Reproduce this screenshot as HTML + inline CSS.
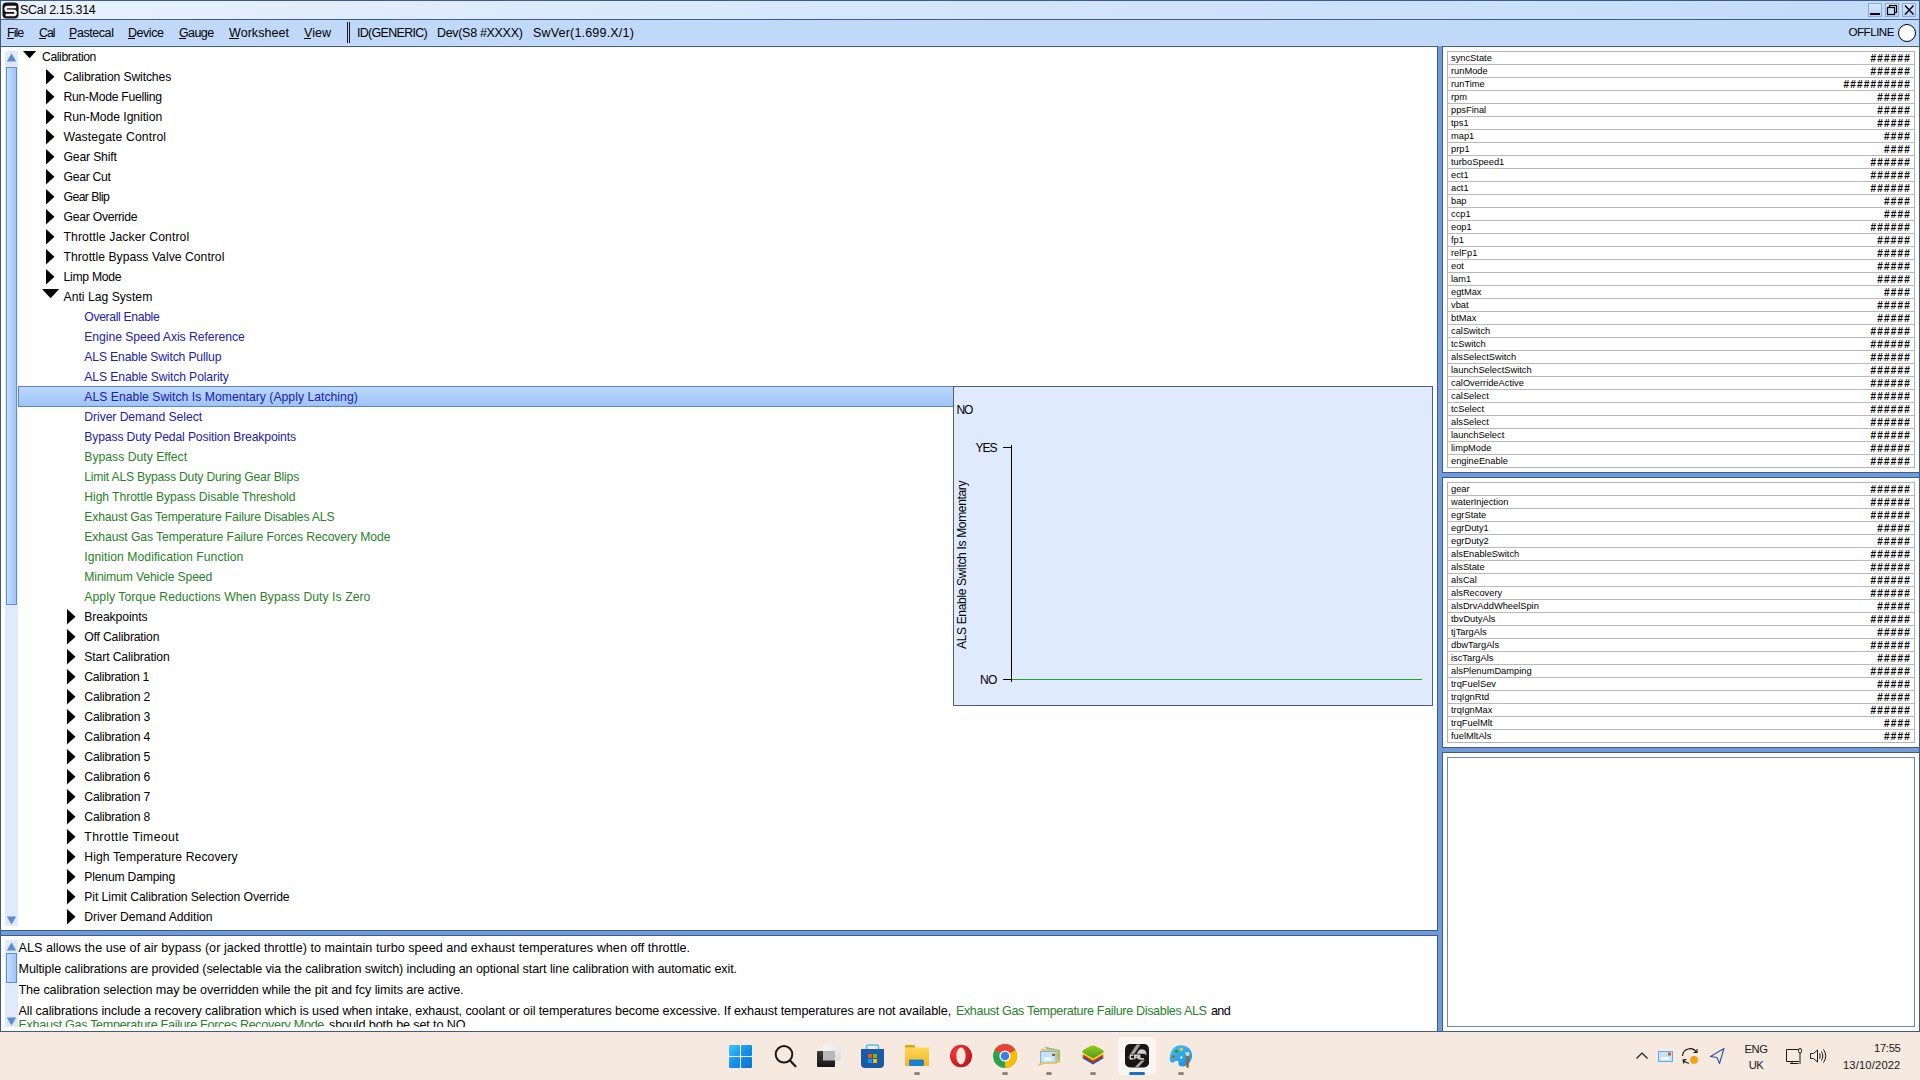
<!DOCTYPE html><html><head><meta charset="utf-8"><style>
*{margin:0;padding:0;box-sizing:border-box}
html,body{width:1920px;height:1080px;overflow:hidden;background:#f6e9df;font-family:"Liberation Sans",sans-serif}
.a{position:absolute}
.t{position:absolute;white-space:pre;line-height:1;font-family:"Liberation Sans",sans-serif}
.u{text-decoration:underline;text-underline-offset:1px}
</style></head><body>
<div class="a" style="left:0;top:0;width:1920px;height:1032px;background:#6f9cd9;border:1px solid #3e5a8a"></div>
<div class="a" style="left:1px;top:1px;width:1918px;height:18px;background:linear-gradient(90deg,#e9f1fd 0%,#d6e6fb 45%,#c3dbf9 100%)"></div>
<div class="a" style="left:0;top:19px;width:1920px;height:1px;background:#3e5a8a"></div>
<div class="a" style="left:1px;top:20px;width:1918px;height:26px;background:#c1d9f9"></div>
<div class="a" style="left:1px;top:45px;width:1918px;height:1px;background:#cadffb"></div>
<svg class="a" style="left:2px;top:2px" width="17" height="17" viewBox="0 0 17 17">
<rect x="0.5" y="0.5" width="16" height="16" rx="4" fill="#111"/>
<path d="M14.2 4.9 H5.6 Q3.6 4.9 3.6 6.9 Q3.6 8.8 5.6 8.8 H11.6 Q13.6 8.8 13.6 10.9 Q13.6 13 11.6 13 H3.6" stroke="#f4f4f4" stroke-width="2.5" fill="none"/>
</svg>
<div class="t " style="left:20px;top:4px;font-size:12.5px;color:#000;letter-spacing:-0.287px;">SCal 2.15.314</div>
<div class="a" style="left:1868px;top:3px;width:14px;height:14px;border:1px solid #8eaad6;background:linear-gradient(#d8e8fd,#b5d2f8)"></div>
<div class="a" style="left:1885px;top:3px;width:14px;height:14px;border:1px solid #8eaad6;background:linear-gradient(#d8e8fd,#b5d2f8)"></div>
<div class="a" style="left:1902px;top:3px;width:14px;height:14px;border:1px solid #8eaad6;background:linear-gradient(#d8e8fd,#b5d2f8)"></div>
<div class="a" style="left:1870px;top:13px;width:10px;height:2px;background:#000"></div>
<svg class="a" style="left:1885px;top:3px" width="14" height="14" viewBox="0 0 14 14"><rect x="4.5" y="2.5" width="7" height="7" fill="none" stroke="#000" stroke-width="1.2"/><rect x="2.5" y="4.5" width="7" height="7" fill="#c8dcf9" stroke="#000" stroke-width="1.2"/></svg>
<svg class="a" style="left:1902px;top:3px" width="14" height="14" viewBox="0 0 14 14"><path d="M3 2.5 L11.5 11.5 M11.5 2.5 L3 11.5" stroke="#000" stroke-width="1.4"/></svg>
<div class="t " style="left:7px;top:27px;font-size:12.5px;color:#000;letter-spacing:-0.964px;">File</div>
<div class="a" style="left:7px;top:38px;width:7px;height:1px;background:#000"></div>
<div class="t " style="left:39px;top:27px;font-size:12.5px;color:#000;letter-spacing:-1.089px;">Cal</div>
<div class="a" style="left:39px;top:38px;width:7px;height:1px;background:#000"></div>
<div class="t " style="left:69px;top:27px;font-size:12.5px;color:#000;letter-spacing:-0.432px;">Pastecal</div>
<div class="a" style="left:69px;top:38px;width:7px;height:1px;background:#000"></div>
<div class="t " style="left:128px;top:27px;font-size:12.5px;color:#000;letter-spacing:-0.453px;">Device</div>
<div class="a" style="left:128px;top:38px;width:7px;height:1px;background:#000"></div>
<div class="t " style="left:179px;top:27px;font-size:12.5px;color:#000;letter-spacing:-0.606px;">Gauge</div>
<div class="a" style="left:179px;top:38px;width:7px;height:1px;background:#000"></div>
<div class="t " style="left:229px;top:27px;font-size:12.5px;color:#000;letter-spacing:0.054px;">Worksheet</div>
<div class="a" style="left:229px;top:38px;width:10px;height:1px;background:#000"></div>
<div class="t " style="left:304px;top:27px;font-size:12.5px;color:#000;letter-spacing:0.031px;">View</div>
<div class="a" style="left:304px;top:38px;width:7px;height:1px;background:#000"></div>
<div class="a" style="left:347px;top:22px;width:1px;height:21px;background:#1a1a1a"></div>
<div class="a" style="left:349px;top:22px;width:1px;height:21px;background:#1a1a1a"></div>
<div class="t " style="left:357px;top:27px;font-size:12.5px;color:#000;letter-spacing:-0.707px;">ID(GENERIC)</div>
<div class="t " style="left:437px;top:27px;font-size:12.5px;color:#000;letter-spacing:-0.317px;">Dev(S8 #XXXX)</div>
<div class="t " style="left:533px;top:27px;font-size:12.5px;color:#000;letter-spacing:0.189px;">SwVer(1.699.X/1)</div>
<div class="t " style="left:1848.5px;top:26px;font-size:11.6px;color:#000;letter-spacing:-0.496px;">OFFLINE</div>
<div class="a" style="left:1898px;top:24px;width:18px;height:18px;border-radius:50%;border:1.3px solid #000;background:#fff"></div>
<div class="a" style="left:0px;top:46px;width:1438px;height:885px;border:1px solid #3e5a8a;background:#fff"></div>
<div class="a" style="left:0px;top:935px;width:1438px;height:97px;border:1px solid #3e5a8a;background:#fff"></div>
<div class="a" style="left:1442px;top:46px;width:478px;height:427px;border:1px solid #3e5a8a;background:#fff"></div>
<div class="a" style="left:1442px;top:477px;width:478px;height:271px;border:1px solid #3e5a8a;background:#fff"></div>
<div class="a" style="left:1442px;top:752px;width:478px;height:280px;border:1px solid #3e5a8a;background:#fff"></div>
<div class="a" style="left:5px;top:51px;width:13px;height:875px;background:#dfebfc"></div>
<svg class="a" style="left:6px;top:53px" width="11" height="9" viewBox="0 0 11 9"><path d="M5.5 0.5 L10.2 8.5 L0.8 8.5 Z" fill="#5b8bd0"/></svg>
<svg class="a" style="left:6px;top:916px" width="11" height="9" viewBox="0 0 11 9"><path d="M0.8 0.5 L10.2 0.5 L5.5 8.5 Z" fill="#5b8bd0"/></svg>
<div class="a" style="left:6px;top:67px;width:11px;height:538px;border:1px solid #6a8cc0;background:linear-gradient(90deg,#c4defd,#9cc3f8)"></div>
<div class="a" style="left:5px;top:940px;width:13px;height:87px;background:#dfebfc"></div>
<svg class="a" style="left:6px;top:942px" width="11" height="9" viewBox="0 0 11 9"><path d="M5.5 0.5 L10.2 8.5 L0.8 8.5 Z" fill="#5b8bd0"/></svg>
<svg class="a" style="left:6px;top:1017px" width="11" height="9" viewBox="0 0 11 9"><path d="M0.8 0.5 L10.2 0.5 L5.5 8.5 Z" fill="#5b8bd0"/></svg>
<div class="a" style="left:6px;top:953px;width:11px;height:30px;border:1px solid #6a8cc0;background:linear-gradient(90deg,#c4defd,#9cc3f8)"></div>
<svg class="a" style="left:23px;top:51px" width="14" height="8" viewBox="0 0 14 8"><path d="M0 0 L13.2 0 L6.6 7.2 Z" fill="#000"/></svg>
<div class="t " style="left:42px;top:51px;font-size:12.2px;color:#000;letter-spacing:-0.388px;">Calibration</div>
<svg class="a" style="left:46px;top:69px" width="9" height="16" viewBox="0 0 9 16"><path d="M0 0 L8.5 7.75 L0 15.5 Z" fill="#000"/></svg>
<div class="t " style="left:63.5px;top:71px;font-size:12.2px;color:#000;letter-spacing:-0.141px;">Calibration Switches</div>
<svg class="a" style="left:46px;top:89px" width="9" height="16" viewBox="0 0 9 16"><path d="M0 0 L8.5 7.75 L0 15.5 Z" fill="#000"/></svg>
<div class="t " style="left:63.5px;top:91px;font-size:12.2px;color:#000;letter-spacing:-0.276px;">Run-Mode Fuelling</div>
<svg class="a" style="left:46px;top:109px" width="9" height="16" viewBox="0 0 9 16"><path d="M0 0 L8.5 7.75 L0 15.5 Z" fill="#000"/></svg>
<div class="t " style="left:63.5px;top:111px;font-size:12.2px;color:#000;letter-spacing:-0.053px;">Run-Mode Ignition</div>
<svg class="a" style="left:46px;top:129px" width="9" height="16" viewBox="0 0 9 16"><path d="M0 0 L8.5 7.75 L0 15.5 Z" fill="#000"/></svg>
<div class="t " style="left:63.5px;top:131px;font-size:12.2px;color:#000;letter-spacing:0.130px;">Wastegate Control</div>
<svg class="a" style="left:46px;top:149px" width="9" height="16" viewBox="0 0 9 16"><path d="M0 0 L8.5 7.75 L0 15.5 Z" fill="#000"/></svg>
<div class="t " style="left:63.5px;top:151px;font-size:12.2px;color:#000;letter-spacing:-0.167px;">Gear Shift</div>
<svg class="a" style="left:46px;top:169px" width="9" height="16" viewBox="0 0 9 16"><path d="M0 0 L8.5 7.75 L0 15.5 Z" fill="#000"/></svg>
<div class="t " style="left:63.5px;top:171px;font-size:12.2px;color:#000;letter-spacing:-0.282px;">Gear Cut</div>
<svg class="a" style="left:46px;top:189px" width="9" height="16" viewBox="0 0 9 16"><path d="M0 0 L8.5 7.75 L0 15.5 Z" fill="#000"/></svg>
<div class="t " style="left:63.5px;top:191px;font-size:12.2px;color:#000;letter-spacing:-0.557px;">Gear Blip</div>
<svg class="a" style="left:46px;top:209px" width="9" height="16" viewBox="0 0 9 16"><path d="M0 0 L8.5 7.75 L0 15.5 Z" fill="#000"/></svg>
<div class="t " style="left:63.5px;top:211px;font-size:12.2px;color:#000;letter-spacing:-0.263px;">Gear Override</div>
<svg class="a" style="left:46px;top:229px" width="9" height="16" viewBox="0 0 9 16"><path d="M0 0 L8.5 7.75 L0 15.5 Z" fill="#000"/></svg>
<div class="t " style="left:63.5px;top:231px;font-size:12.2px;color:#000;letter-spacing:0.110px;">Throttle Jacker Control</div>
<svg class="a" style="left:46px;top:249px" width="9" height="16" viewBox="0 0 9 16"><path d="M0 0 L8.5 7.75 L0 15.5 Z" fill="#000"/></svg>
<div class="t " style="left:63.5px;top:251px;font-size:12.2px;color:#000;letter-spacing:0.020px;">Throttle Bypass Valve Control</div>
<svg class="a" style="left:46px;top:269px" width="9" height="16" viewBox="0 0 9 16"><path d="M0 0 L8.5 7.75 L0 15.5 Z" fill="#000"/></svg>
<div class="t " style="left:63.5px;top:271px;font-size:12.2px;color:#000;letter-spacing:-0.277px;">Limp Mode</div>
<svg class="a" style="left:42px;top:289px" width="18" height="10" viewBox="0 0 18 10"><path d="M0 0 L17.2 0 L8.6 9.3 Z" fill="#000"/></svg>
<div class="t " style="left:63.5px;top:291px;font-size:12.2px;color:#000;letter-spacing:0.003px;">Anti Lag System</div>
<div class="t " style="left:84.3px;top:311px;font-size:12.2px;color:#2121a6;letter-spacing:-0.347px;">Overall Enable</div>
<div class="t " style="left:84.3px;top:331px;font-size:12.2px;color:#2121a6;letter-spacing:-0.057px;">Engine Speed Axis Reference</div>
<div class="t " style="left:84.3px;top:351px;font-size:12.2px;color:#2121a6;letter-spacing:-0.163px;">ALS Enable Switch Pullup</div>
<div class="t " style="left:84.3px;top:371px;font-size:12.2px;color:#2121a6;letter-spacing:-0.123px;">ALS Enable Switch Polarity</div>
<div class="a" style="left:18px;top:386px;width:940px;height:21px;border:1px solid #5f82b8;background:linear-gradient(#bcd8fc,#9dc4f8)"></div>
<div class="t " style="left:84.3px;top:391px;font-size:12.2px;color:#2121a6;letter-spacing:0.025px;">ALS Enable Switch Is Momentary (Apply Latching)</div>
<div class="t " style="left:84.3px;top:411px;font-size:12.2px;color:#2121a6;letter-spacing:-0.076px;">Driver Demand Select</div>
<div class="t " style="left:84.3px;top:431px;font-size:12.2px;color:#2121a6;letter-spacing:-0.154px;">Bypass Duty Pedal Position Breakpoints</div>
<div class="t " style="left:84.3px;top:451px;font-size:12.2px;color:#2a7f2a;letter-spacing:0.003px;">Bypass Duty Effect</div>
<div class="t " style="left:84.3px;top:471px;font-size:12.2px;color:#2a7f2a;letter-spacing:-0.207px;">Limit ALS Bypass Duty During Gear Blips</div>
<div class="t " style="left:84.3px;top:491px;font-size:12.2px;color:#2a7f2a;letter-spacing:-0.084px;">High Throttle Bypass Disable Threshold</div>
<div class="t " style="left:84.3px;top:511px;font-size:12.2px;color:#2a7f2a;letter-spacing:-0.177px;">Exhaust Gas Temperature Failure Disables ALS</div>
<div class="t " style="left:84.3px;top:531px;font-size:12.2px;color:#2a7f2a;letter-spacing:-0.103px;">Exhaust Gas Temperature Failure Forces Recovery Mode</div>
<div class="t " style="left:84.3px;top:551px;font-size:12.2px;color:#2a7f2a;letter-spacing:0.041px;">Ignition Modification Function</div>
<div class="t " style="left:84.3px;top:571px;font-size:12.2px;color:#2a7f2a;letter-spacing:-0.140px;">Minimum Vehicle Speed</div>
<div class="t " style="left:84.3px;top:591px;font-size:12.2px;color:#2a7f2a;letter-spacing:0.052px;">Apply Torque Reductions When Bypass Duty Is Zero</div>
<svg class="a" style="left:67px;top:609px" width="9" height="16" viewBox="0 0 9 16"><path d="M0 0 L8.5 7.75 L0 15.5 Z" fill="#000"/></svg>
<div class="t " style="left:84.3px;top:611px;font-size:12.2px;color:#000;letter-spacing:-0.114px;">Breakpoints</div>
<svg class="a" style="left:67px;top:629px" width="9" height="16" viewBox="0 0 9 16"><path d="M0 0 L8.5 7.75 L0 15.5 Z" fill="#000"/></svg>
<div class="t " style="left:84.3px;top:631px;font-size:12.2px;color:#000;letter-spacing:-0.179px;">Off Calibration</div>
<svg class="a" style="left:67px;top:649px" width="9" height="16" viewBox="0 0 9 16"><path d="M0 0 L8.5 7.75 L0 15.5 Z" fill="#000"/></svg>
<div class="t " style="left:84.3px;top:651px;font-size:12.2px;color:#000;letter-spacing:-0.123px;">Start Calibration</div>
<svg class="a" style="left:67px;top:669px" width="9" height="16" viewBox="0 0 9 16"><path d="M0 0 L8.5 7.75 L0 15.5 Z" fill="#000"/></svg>
<div class="t " style="left:84.3px;top:671px;font-size:12.2px;color:#000;letter-spacing:-0.287px;">Calibration 1</div>
<svg class="a" style="left:67px;top:689px" width="9" height="16" viewBox="0 0 9 16"><path d="M0 0 L8.5 7.75 L0 15.5 Z" fill="#000"/></svg>
<div class="t " style="left:84.3px;top:691px;font-size:12.2px;color:#000;letter-spacing:-0.211px;">Calibration 2</div>
<svg class="a" style="left:67px;top:709px" width="9" height="16" viewBox="0 0 9 16"><path d="M0 0 L8.5 7.75 L0 15.5 Z" fill="#000"/></svg>
<div class="t " style="left:84.3px;top:711px;font-size:12.2px;color:#000;letter-spacing:-0.211px;">Calibration 3</div>
<svg class="a" style="left:67px;top:729px" width="9" height="16" viewBox="0 0 9 16"><path d="M0 0 L8.5 7.75 L0 15.5 Z" fill="#000"/></svg>
<div class="t " style="left:84.3px;top:731px;font-size:12.2px;color:#000;letter-spacing:-0.211px;">Calibration 4</div>
<svg class="a" style="left:67px;top:749px" width="9" height="16" viewBox="0 0 9 16"><path d="M0 0 L8.5 7.75 L0 15.5 Z" fill="#000"/></svg>
<div class="t " style="left:84.3px;top:751px;font-size:12.2px;color:#000;letter-spacing:-0.211px;">Calibration 5</div>
<svg class="a" style="left:67px;top:769px" width="9" height="16" viewBox="0 0 9 16"><path d="M0 0 L8.5 7.75 L0 15.5 Z" fill="#000"/></svg>
<div class="t " style="left:84.3px;top:771px;font-size:12.2px;color:#000;letter-spacing:-0.211px;">Calibration 6</div>
<svg class="a" style="left:67px;top:789px" width="9" height="16" viewBox="0 0 9 16"><path d="M0 0 L8.5 7.75 L0 15.5 Z" fill="#000"/></svg>
<div class="t " style="left:84.3px;top:791px;font-size:12.2px;color:#000;letter-spacing:-0.211px;">Calibration 7</div>
<svg class="a" style="left:67px;top:809px" width="9" height="16" viewBox="0 0 9 16"><path d="M0 0 L8.5 7.75 L0 15.5 Z" fill="#000"/></svg>
<div class="t " style="left:84.3px;top:811px;font-size:12.2px;color:#000;letter-spacing:-0.211px;">Calibration 8</div>
<svg class="a" style="left:67px;top:829px" width="9" height="16" viewBox="0 0 9 16"><path d="M0 0 L8.5 7.75 L0 15.5 Z" fill="#000"/></svg>
<div class="t " style="left:84.3px;top:831px;font-size:12.2px;color:#000;letter-spacing:0.421px;">Throttle Timeout</div>
<svg class="a" style="left:67px;top:849px" width="9" height="16" viewBox="0 0 9 16"><path d="M0 0 L8.5 7.75 L0 15.5 Z" fill="#000"/></svg>
<div class="t " style="left:84.3px;top:851px;font-size:12.2px;color:#000;letter-spacing:0.079px;">High Temperature Recovery</div>
<svg class="a" style="left:67px;top:869px" width="9" height="16" viewBox="0 0 9 16"><path d="M0 0 L8.5 7.75 L0 15.5 Z" fill="#000"/></svg>
<div class="t " style="left:84.3px;top:871px;font-size:12.2px;color:#000;letter-spacing:-0.199px;">Plenum Damping</div>
<svg class="a" style="left:67px;top:889px" width="9" height="16" viewBox="0 0 9 16"><path d="M0 0 L8.5 7.75 L0 15.5 Z" fill="#000"/></svg>
<div class="t " style="left:84.3px;top:891px;font-size:12.2px;color:#000;letter-spacing:-0.084px;">Pit Limit Calibration Selection Override</div>
<svg class="a" style="left:67px;top:909px" width="9" height="16" viewBox="0 0 9 16"><path d="M0 0 L8.5 7.75 L0 15.5 Z" fill="#000"/></svg>
<div class="t " style="left:84.3px;top:911px;font-size:12.2px;color:#000;letter-spacing:-0.019px;">Driver Demand Addition</div>
<div class="a" style="left:953px;top:386px;width:480px;height:320px;border:1px solid #4d5d7b;background:#dfeafc"></div>
<div class="t " style="left:956.4px;top:404px;font-size:12px;color:#000;letter-spacing:-1.000px;">NO</div>
<div class="t " style="left:975.6px;top:442px;font-size:12px;color:#000;letter-spacing:-1.005px;">YES</div>
<div class="t " style="left:980px;top:674px;font-size:12px;color:#000;letter-spacing:-0.650px;">NO</div>
<div class="a" style="left:1011px;top:445px;width:1px;height:237px;background:#000"></div>
<div class="a" style="left:1003px;top:447px;width:9px;height:1px;background:#000"></div>
<div class="a" style="left:1003px;top:679px;width:9px;height:1px;background:#000"></div>
<div class="a" style="left:1012px;top:679px;width:410px;height:1px;background:#2e9a3a"></div>
<div class="a" style="left:956px;top:649px;width:0;height:0"><div class="t" style="left:0;top:0;transform-origin:0 0;transform:rotate(-90deg);font-size:12px;line-height:1;letter-spacing:-0.33px;color:#000">ALS Enable Switch Is Momentary</div></div>
<div class="a" style="left:18px;top:940px;width:1415px;height:87px;overflow:hidden">
<div class="t " style="left:0.5px;top:2px;font-size:12.6px;color:#000;letter-spacing:0.027px;">ALS allows the use of air bypass (or jacked throttle) to maintain turbo speed and exhaust temperatures when off throttle.</div>
<div class="t " style="left:0.5px;top:23px;font-size:12.6px;color:#000;letter-spacing:-0.108px;">Multiple calibrations are provided (selectable via the calibration switch) including an optional start line calibration with automatic exit.</div>
<div class="t " style="left:0.5px;top:44px;font-size:12.6px;color:#000;letter-spacing:-0.077px;">The calibration selection may be overridden while the pit and fcy limits are active.</div>
<div class="t " style="left:0.5px;top:65px;font-size:12.6px;color:#000;letter-spacing:-0.105px;">All calibrations include a recovery calibration which is used when intake, exhaust, coolant or oil temperatures become excessive. If exhaust temperatures are not available,</div>
<div class="t " style="left:937.9px;top:65px;font-size:12.6px;color:#2a7f2a;letter-spacing:-0.358px;">Exhaust Gas Temperature Failure Disables ALS</div>
<div class="t " style="left:1193px;top:65px;font-size:12.6px;color:#000;letter-spacing:-0.672px;">and</div>
<div class="t " style="left:0.5px;top:79px;font-size:12.6px;color:#2a7f2a;letter-spacing:-0.312px;">Exhaust Gas Temperature Failure Forces Recovery Mode</div>
<div class="t " style="left:311px;top:79px;font-size:12.6px;color:#000;letter-spacing:-0.123px;">should both be set to NO.</div>
</div>
<div class="a" style="left:1447px;top:51px;width:468px;height:417px;border:1px solid #b4b4b4;background:#fff"></div>
<div class="t " style="left:1451px;top:54px;font-size:9.3px;color:#000;">syncState</div>
<div class="t" style="left:1870.50px;top:54px;font-size:10px;font-weight:bold;letter-spacing:1.19px;color:#000">######</div>
<div class="a" style="left:1448px;top:64px;width:466px;height:1px;background:#b9b9b9"></div>
<div class="t " style="left:1451px;top:67px;font-size:9.3px;color:#000;">runMode</div>
<div class="t" style="left:1870.50px;top:67px;font-size:10px;font-weight:bold;letter-spacing:1.19px;color:#000">######</div>
<div class="a" style="left:1448px;top:77px;width:466px;height:1px;background:#b9b9b9"></div>
<div class="t " style="left:1451px;top:80px;font-size:9.3px;color:#000;">runTime</div>
<div class="t" style="left:1843.50px;top:80px;font-size:10px;font-weight:bold;letter-spacing:1.19px;color:#000">##########</div>
<div class="a" style="left:1448px;top:90px;width:466px;height:1px;background:#b9b9b9"></div>
<div class="t " style="left:1451px;top:93px;font-size:9.3px;color:#000;">rpm</div>
<div class="t" style="left:1877.25px;top:93px;font-size:10px;font-weight:bold;letter-spacing:1.19px;color:#000">#####</div>
<div class="a" style="left:1448px;top:103px;width:466px;height:1px;background:#b9b9b9"></div>
<div class="t " style="left:1451px;top:106px;font-size:9.3px;color:#000;">ppsFinal</div>
<div class="t" style="left:1877.25px;top:106px;font-size:10px;font-weight:bold;letter-spacing:1.19px;color:#000">#####</div>
<div class="a" style="left:1448px;top:116px;width:466px;height:1px;background:#b9b9b9"></div>
<div class="t " style="left:1451px;top:119px;font-size:9.3px;color:#000;">tps1</div>
<div class="t" style="left:1877.25px;top:119px;font-size:10px;font-weight:bold;letter-spacing:1.19px;color:#000">#####</div>
<div class="a" style="left:1448px;top:129px;width:466px;height:1px;background:#b9b9b9"></div>
<div class="t " style="left:1451px;top:132px;font-size:9.3px;color:#000;">map1</div>
<div class="t" style="left:1884.00px;top:132px;font-size:10px;font-weight:bold;letter-spacing:1.19px;color:#000">####</div>
<div class="a" style="left:1448px;top:142px;width:466px;height:1px;background:#b9b9b9"></div>
<div class="t " style="left:1451px;top:145px;font-size:9.3px;color:#000;">prp1</div>
<div class="t" style="left:1884.00px;top:145px;font-size:10px;font-weight:bold;letter-spacing:1.19px;color:#000">####</div>
<div class="a" style="left:1448px;top:155px;width:466px;height:1px;background:#b9b9b9"></div>
<div class="t " style="left:1451px;top:158px;font-size:9.3px;color:#000;">turboSpeed1</div>
<div class="t" style="left:1870.50px;top:158px;font-size:10px;font-weight:bold;letter-spacing:1.19px;color:#000">######</div>
<div class="a" style="left:1448px;top:168px;width:466px;height:1px;background:#b9b9b9"></div>
<div class="t " style="left:1451px;top:171px;font-size:9.3px;color:#000;">ect1</div>
<div class="t" style="left:1870.50px;top:171px;font-size:10px;font-weight:bold;letter-spacing:1.19px;color:#000">######</div>
<div class="a" style="left:1448px;top:181px;width:466px;height:1px;background:#b9b9b9"></div>
<div class="t " style="left:1451px;top:184px;font-size:9.3px;color:#000;">act1</div>
<div class="t" style="left:1870.50px;top:184px;font-size:10px;font-weight:bold;letter-spacing:1.19px;color:#000">######</div>
<div class="a" style="left:1448px;top:194px;width:466px;height:1px;background:#b9b9b9"></div>
<div class="t " style="left:1451px;top:197px;font-size:9.3px;color:#000;">bap</div>
<div class="t" style="left:1884.00px;top:197px;font-size:10px;font-weight:bold;letter-spacing:1.19px;color:#000">####</div>
<div class="a" style="left:1448px;top:207px;width:466px;height:1px;background:#b9b9b9"></div>
<div class="t " style="left:1451px;top:210px;font-size:9.3px;color:#000;">ccp1</div>
<div class="t" style="left:1884.00px;top:210px;font-size:10px;font-weight:bold;letter-spacing:1.19px;color:#000">####</div>
<div class="a" style="left:1448px;top:220px;width:466px;height:1px;background:#b9b9b9"></div>
<div class="t " style="left:1451px;top:223px;font-size:9.3px;color:#000;">eop1</div>
<div class="t" style="left:1870.50px;top:223px;font-size:10px;font-weight:bold;letter-spacing:1.19px;color:#000">######</div>
<div class="a" style="left:1448px;top:233px;width:466px;height:1px;background:#b9b9b9"></div>
<div class="t " style="left:1451px;top:236px;font-size:9.3px;color:#000;">fp1</div>
<div class="t" style="left:1877.25px;top:236px;font-size:10px;font-weight:bold;letter-spacing:1.19px;color:#000">#####</div>
<div class="a" style="left:1448px;top:246px;width:466px;height:1px;background:#b9b9b9"></div>
<div class="t " style="left:1451px;top:249px;font-size:9.3px;color:#000;">relFp1</div>
<div class="t" style="left:1877.25px;top:249px;font-size:10px;font-weight:bold;letter-spacing:1.19px;color:#000">#####</div>
<div class="a" style="left:1448px;top:259px;width:466px;height:1px;background:#b9b9b9"></div>
<div class="t " style="left:1451px;top:262px;font-size:9.3px;color:#000;">eot</div>
<div class="t" style="left:1877.25px;top:262px;font-size:10px;font-weight:bold;letter-spacing:1.19px;color:#000">#####</div>
<div class="a" style="left:1448px;top:272px;width:466px;height:1px;background:#b9b9b9"></div>
<div class="t " style="left:1451px;top:275px;font-size:9.3px;color:#000;">lam1</div>
<div class="t" style="left:1877.25px;top:275px;font-size:10px;font-weight:bold;letter-spacing:1.19px;color:#000">#####</div>
<div class="a" style="left:1448px;top:285px;width:466px;height:1px;background:#b9b9b9"></div>
<div class="t " style="left:1451px;top:288px;font-size:9.3px;color:#000;">egtMax</div>
<div class="t" style="left:1884.00px;top:288px;font-size:10px;font-weight:bold;letter-spacing:1.19px;color:#000">####</div>
<div class="a" style="left:1448px;top:298px;width:466px;height:1px;background:#b9b9b9"></div>
<div class="t " style="left:1451px;top:301px;font-size:9.3px;color:#000;">vbat</div>
<div class="t" style="left:1877.25px;top:301px;font-size:10px;font-weight:bold;letter-spacing:1.19px;color:#000">#####</div>
<div class="a" style="left:1448px;top:311px;width:466px;height:1px;background:#b9b9b9"></div>
<div class="t " style="left:1451px;top:314px;font-size:9.3px;color:#000;">btMax</div>
<div class="t" style="left:1877.25px;top:314px;font-size:10px;font-weight:bold;letter-spacing:1.19px;color:#000">#####</div>
<div class="a" style="left:1448px;top:324px;width:466px;height:1px;background:#b9b9b9"></div>
<div class="t " style="left:1451px;top:327px;font-size:9.3px;color:#000;">calSwitch</div>
<div class="t" style="left:1870.50px;top:327px;font-size:10px;font-weight:bold;letter-spacing:1.19px;color:#000">######</div>
<div class="a" style="left:1448px;top:337px;width:466px;height:1px;background:#b9b9b9"></div>
<div class="t " style="left:1451px;top:340px;font-size:9.3px;color:#000;">tcSwitch</div>
<div class="t" style="left:1870.50px;top:340px;font-size:10px;font-weight:bold;letter-spacing:1.19px;color:#000">######</div>
<div class="a" style="left:1448px;top:350px;width:466px;height:1px;background:#b9b9b9"></div>
<div class="t " style="left:1451px;top:353px;font-size:9.3px;color:#000;">alsSelectSwitch</div>
<div class="t" style="left:1870.50px;top:353px;font-size:10px;font-weight:bold;letter-spacing:1.19px;color:#000">######</div>
<div class="a" style="left:1448px;top:363px;width:466px;height:1px;background:#b9b9b9"></div>
<div class="t " style="left:1451px;top:366px;font-size:9.3px;color:#000;">launchSelectSwitch</div>
<div class="t" style="left:1870.50px;top:366px;font-size:10px;font-weight:bold;letter-spacing:1.19px;color:#000">######</div>
<div class="a" style="left:1448px;top:376px;width:466px;height:1px;background:#b9b9b9"></div>
<div class="t " style="left:1451px;top:379px;font-size:9.3px;color:#000;">calOverrideActive</div>
<div class="t" style="left:1870.50px;top:379px;font-size:10px;font-weight:bold;letter-spacing:1.19px;color:#000">######</div>
<div class="a" style="left:1448px;top:389px;width:466px;height:1px;background:#b9b9b9"></div>
<div class="t " style="left:1451px;top:392px;font-size:9.3px;color:#000;">calSelect</div>
<div class="t" style="left:1870.50px;top:392px;font-size:10px;font-weight:bold;letter-spacing:1.19px;color:#000">######</div>
<div class="a" style="left:1448px;top:402px;width:466px;height:1px;background:#b9b9b9"></div>
<div class="t " style="left:1451px;top:405px;font-size:9.3px;color:#000;">tcSelect</div>
<div class="t" style="left:1870.50px;top:405px;font-size:10px;font-weight:bold;letter-spacing:1.19px;color:#000">######</div>
<div class="a" style="left:1448px;top:415px;width:466px;height:1px;background:#b9b9b9"></div>
<div class="t " style="left:1451px;top:418px;font-size:9.3px;color:#000;">alsSelect</div>
<div class="t" style="left:1870.50px;top:418px;font-size:10px;font-weight:bold;letter-spacing:1.19px;color:#000">######</div>
<div class="a" style="left:1448px;top:428px;width:466px;height:1px;background:#b9b9b9"></div>
<div class="t " style="left:1451px;top:431px;font-size:9.3px;color:#000;">launchSelect</div>
<div class="t" style="left:1870.50px;top:431px;font-size:10px;font-weight:bold;letter-spacing:1.19px;color:#000">######</div>
<div class="a" style="left:1448px;top:441px;width:466px;height:1px;background:#b9b9b9"></div>
<div class="t " style="left:1451px;top:444px;font-size:9.3px;color:#000;">limpMode</div>
<div class="t" style="left:1870.50px;top:444px;font-size:10px;font-weight:bold;letter-spacing:1.19px;color:#000">######</div>
<div class="a" style="left:1448px;top:454px;width:466px;height:1px;background:#b9b9b9"></div>
<div class="t " style="left:1451px;top:457px;font-size:9.3px;color:#000;">engineEnable</div>
<div class="t" style="left:1870.50px;top:457px;font-size:10px;font-weight:bold;letter-spacing:1.19px;color:#000">######</div>
<div class="a" style="left:1447px;top:482px;width:468px;height:261px;border:1px solid #b4b4b4;background:#fff"></div>
<div class="t " style="left:1451px;top:485px;font-size:9.3px;color:#000;">gear</div>
<div class="t" style="left:1870.50px;top:485px;font-size:10px;font-weight:bold;letter-spacing:1.19px;color:#000">######</div>
<div class="a" style="left:1448px;top:495px;width:466px;height:1px;background:#b9b9b9"></div>
<div class="t " style="left:1451px;top:498px;font-size:9.3px;color:#000;">waterInjection</div>
<div class="t" style="left:1870.50px;top:498px;font-size:10px;font-weight:bold;letter-spacing:1.19px;color:#000">######</div>
<div class="a" style="left:1448px;top:508px;width:466px;height:1px;background:#b9b9b9"></div>
<div class="t " style="left:1451px;top:511px;font-size:9.3px;color:#000;">egrState</div>
<div class="t" style="left:1870.50px;top:511px;font-size:10px;font-weight:bold;letter-spacing:1.19px;color:#000">######</div>
<div class="a" style="left:1448px;top:521px;width:466px;height:1px;background:#b9b9b9"></div>
<div class="t " style="left:1451px;top:524px;font-size:9.3px;color:#000;">egrDuty1</div>
<div class="t" style="left:1877.25px;top:524px;font-size:10px;font-weight:bold;letter-spacing:1.19px;color:#000">#####</div>
<div class="a" style="left:1448px;top:534px;width:466px;height:1px;background:#b9b9b9"></div>
<div class="t " style="left:1451px;top:537px;font-size:9.3px;color:#000;">egrDuty2</div>
<div class="t" style="left:1877.25px;top:537px;font-size:10px;font-weight:bold;letter-spacing:1.19px;color:#000">#####</div>
<div class="a" style="left:1448px;top:547px;width:466px;height:1px;background:#b9b9b9"></div>
<div class="t " style="left:1451px;top:550px;font-size:9.3px;color:#000;">alsEnableSwitch</div>
<div class="t" style="left:1870.50px;top:550px;font-size:10px;font-weight:bold;letter-spacing:1.19px;color:#000">######</div>
<div class="a" style="left:1448px;top:560px;width:466px;height:1px;background:#b9b9b9"></div>
<div class="t " style="left:1451px;top:563px;font-size:9.3px;color:#000;">alsState</div>
<div class="t" style="left:1870.50px;top:563px;font-size:10px;font-weight:bold;letter-spacing:1.19px;color:#000">######</div>
<div class="a" style="left:1448px;top:573px;width:466px;height:1px;background:#b9b9b9"></div>
<div class="t " style="left:1451px;top:576px;font-size:9.3px;color:#000;">alsCal</div>
<div class="t" style="left:1870.50px;top:576px;font-size:10px;font-weight:bold;letter-spacing:1.19px;color:#000">######</div>
<div class="a" style="left:1448px;top:586px;width:466px;height:1px;background:#b9b9b9"></div>
<div class="t " style="left:1451px;top:589px;font-size:9.3px;color:#000;">alsRecovery</div>
<div class="t" style="left:1870.50px;top:589px;font-size:10px;font-weight:bold;letter-spacing:1.19px;color:#000">######</div>
<div class="a" style="left:1448px;top:599px;width:466px;height:1px;background:#b9b9b9"></div>
<div class="t " style="left:1451px;top:602px;font-size:9.3px;color:#000;">alsDrvAddWheelSpin</div>
<div class="t" style="left:1877.25px;top:602px;font-size:10px;font-weight:bold;letter-spacing:1.19px;color:#000">#####</div>
<div class="a" style="left:1448px;top:612px;width:466px;height:1px;background:#b9b9b9"></div>
<div class="t " style="left:1451px;top:615px;font-size:9.3px;color:#000;">tbvDutyAls</div>
<div class="t" style="left:1870.50px;top:615px;font-size:10px;font-weight:bold;letter-spacing:1.19px;color:#000">######</div>
<div class="a" style="left:1448px;top:625px;width:466px;height:1px;background:#b9b9b9"></div>
<div class="t " style="left:1451px;top:628px;font-size:9.3px;color:#000;">tjTargAls</div>
<div class="t" style="left:1877.25px;top:628px;font-size:10px;font-weight:bold;letter-spacing:1.19px;color:#000">#####</div>
<div class="a" style="left:1448px;top:638px;width:466px;height:1px;background:#b9b9b9"></div>
<div class="t " style="left:1451px;top:641px;font-size:9.3px;color:#000;">dbwTargAls</div>
<div class="t" style="left:1870.50px;top:641px;font-size:10px;font-weight:bold;letter-spacing:1.19px;color:#000">######</div>
<div class="a" style="left:1448px;top:651px;width:466px;height:1px;background:#b9b9b9"></div>
<div class="t " style="left:1451px;top:654px;font-size:9.3px;color:#000;">iscTargAls</div>
<div class="t" style="left:1877.25px;top:654px;font-size:10px;font-weight:bold;letter-spacing:1.19px;color:#000">#####</div>
<div class="a" style="left:1448px;top:664px;width:466px;height:1px;background:#b9b9b9"></div>
<div class="t " style="left:1451px;top:667px;font-size:9.3px;color:#000;">alsPlenumDamping</div>
<div class="t" style="left:1870.50px;top:667px;font-size:10px;font-weight:bold;letter-spacing:1.19px;color:#000">######</div>
<div class="a" style="left:1448px;top:677px;width:466px;height:1px;background:#b9b9b9"></div>
<div class="t " style="left:1451px;top:680px;font-size:9.3px;color:#000;">trqFuelSev</div>
<div class="t" style="left:1877.25px;top:680px;font-size:10px;font-weight:bold;letter-spacing:1.19px;color:#000">#####</div>
<div class="a" style="left:1448px;top:690px;width:466px;height:1px;background:#b9b9b9"></div>
<div class="t " style="left:1451px;top:693px;font-size:9.3px;color:#000;">trqIgnRtd</div>
<div class="t" style="left:1877.25px;top:693px;font-size:10px;font-weight:bold;letter-spacing:1.19px;color:#000">#####</div>
<div class="a" style="left:1448px;top:703px;width:466px;height:1px;background:#b9b9b9"></div>
<div class="t " style="left:1451px;top:706px;font-size:9.3px;color:#000;">trqIgnMax</div>
<div class="t" style="left:1870.50px;top:706px;font-size:10px;font-weight:bold;letter-spacing:1.19px;color:#000">######</div>
<div class="a" style="left:1448px;top:716px;width:466px;height:1px;background:#b9b9b9"></div>
<div class="t " style="left:1451px;top:719px;font-size:9.3px;color:#000;">trqFuelMlt</div>
<div class="t" style="left:1884.00px;top:719px;font-size:10px;font-weight:bold;letter-spacing:1.19px;color:#000">####</div>
<div class="a" style="left:1448px;top:729px;width:466px;height:1px;background:#b9b9b9"></div>
<div class="t " style="left:1451px;top:732px;font-size:9.3px;color:#000;">fuelMltAls</div>
<div class="t" style="left:1884.00px;top:732px;font-size:10px;font-weight:bold;letter-spacing:1.19px;color:#000">####</div>
<div class="a" style="left:1447px;top:757px;width:468px;height:270px;border:1px solid #7088b0;background:#fff"></div>
<div class="a" style="left:0;top:1032px;width:1920px;height:48px;background:#f6e9df"></div>
<svg class="a" style="left:0;top:1032px" width="1920" height="48" viewBox="0 1032 1920 48">
<defs>
<linearGradient id="wg" gradientUnits="userSpaceOnUse" x1="729" y1="1045" x2="752" y2="1068"><stop offset="0" stop-color="#3cc8fa"/><stop offset="0.5" stop-color="#1591e8"/><stop offset="1" stop-color="#0b6fd8"/></linearGradient>
<linearGradient id="tvb" x1="0" y1="0" x2="1" y2="1"><stop offset="0" stop-color="#f8f8f8"/><stop offset="1" stop-color="#dcdcdc"/></linearGradient>
<linearGradient id="tvf" x1="0" y1="0" x2="0" y2="1"><stop offset="0" stop-color="#3a3a3a"/><stop offset="1" stop-color="#151515"/></linearGradient>
<linearGradient id="fold" x1="0" y1="0" x2="0" y2="1"><stop offset="0" stop-color="#ffd75a"/><stop offset="1" stop-color="#f2b71e"/></linearGradient>
<linearGradient id="bsg" x1="0" y1="0" x2="0" y2="1"><stop offset="0" stop-color="#9acb1e"/><stop offset="1" stop-color="#4c9a1c"/></linearGradient>
<radialGradient id="opg" cx="0.35" cy="0.35" r="0.8"><stop offset="0" stop-color="#ff3b3b"/><stop offset="1" stop-color="#b0101a"/></radialGradient>
</defs>
<!-- windows logo -->
<rect x="729" y="1045" width="11" height="11" rx="1" fill="url(#wg)"/>
<rect x="741" y="1045" width="11" height="11" rx="1" fill="url(#wg)"/>
<rect x="729" y="1057" width="11" height="11" rx="1" fill="url(#wg)"/>
<rect x="741" y="1057" width="11" height="11" rx="1" fill="url(#wg)"/>
<!-- search -->
<circle cx="784" cy="1054.3" r="8.3" fill="none" stroke="#1e1a18" stroke-width="2"/>
<path d="M790 1060.5 L795.5 1066.2" stroke="#1e1a18" stroke-width="2.2" stroke-linecap="round"/>
<!-- task view -->
<rect x="823" y="1045" width="17.5" height="15.5" rx="1" fill="url(#tvb)"/>
<rect x="817" y="1051" width="18" height="16" rx="1" fill="url(#tvf)"/>
<rect x="823" y="1051" width="12" height="9.5" fill="#b8b8b8"/>
<!-- store -->
<path d="M866.5 1049 V1046.5 Q866.5 1045 868 1045 H877 Q878.5 1045 878.5 1046.5 V1049" fill="none" stroke="#4cc2f0" stroke-width="1.6"/>
<path d="M861 1049 H884 V1064 Q884 1068 880 1068 H865 Q861 1068 861 1064 Z" fill="#1b5aa6"/>
<rect x="868" y="1054" width="4" height="4" fill="#f2501e"/>
<rect x="873" y="1054" width="4" height="4" fill="#7eb900"/>
<rect x="868" y="1059" width="4" height="4" fill="#00a3ee"/>
<rect x="873" y="1059" width="4" height="4" fill="#ffb800"/>
<!-- explorer -->
<rect x="905" y="1045" width="10" height="5" rx="1" fill="#dea319"/>
<rect x="905" y="1047.5" width="24" height="18.5" rx="0.5" fill="url(#fold)"/>
<rect x="909" y="1059.5" width="15" height="6.5" rx="1.5" fill="#1a7fd0"/>
<rect x="914" y="1072" width="6" height="3" rx="1.5" fill="#8c8580"/>
<!-- opera -->
<ellipse cx="961" cy="1056" rx="11" ry="11.3" fill="url(#opg)"/>
<ellipse cx="961" cy="1056" rx="4.6" ry="8.4" fill="#f6e9df"/>
<!-- chrome -->
<circle cx="1005" cy="1056" r="12" fill="#2ba24c"/>
<path d="M1005 1056 L994.6 1050 A12 12 0 0 1 1015.4 1050 Z" fill="#e94235"/>
<path d="M1005 1056 L1015.4 1050 A12 12 0 0 1 1005 1068 Z" fill="#fbbc04"/>
<circle cx="1005" cy="1056" r="5.6" fill="#fff"/>
<circle cx="1005" cy="1056" r="4.3" fill="#3c7ee6"/>
<rect x="1002" y="1072" width="6" height="3" rx="1.5" fill="#8c8580"/>
<!-- mail -->
<path d="M1044 1046.5 L1060 1050 V1061 L1059 1061 Z" fill="#8cc870"/>
<path d="M1041 1048.5 L1058 1050.5 V1062 H1041 Z" fill="#f0c070"/>
<rect x="1040.5" y="1051.5" width="15.5" height="11.5" fill="#c2e4fa" stroke="#7ea8d0" stroke-width="0.9"/>
<rect x="1044" y="1057.5" width="7.5" height="3" fill="#f4fbff"/>
<rect x="1052" y="1053.8" width="3" height="2.2" fill="#a85a18"/>
<path d="M1038 1065 Q1046 1062 1052 1062.5 Q1056 1063 1060 1061.5" stroke="#f2c04a" stroke-width="1.4" fill="none"/>
<rect x="1046" y="1072" width="6" height="3" rx="1.5" fill="#8c8580"/>
<!-- bluestacks -->
<path d="M1082 1058 L1093 1052 L1104 1058 L1093 1064.5 Z" fill="#2d55a8"/>
<path d="M1082 1056 L1093 1050 L1104 1056 L1093 1062.5 Z" fill="#d52b1e"/>
<path d="M1082 1054 L1093 1048 L1104 1054 L1093 1060.5 Z" fill="#f5d21a"/>
<path d="M1082 1052 Q1082 1050.5 1084 1049.5 L1091 1045.8 Q1093 1045 1095 1045.8 L1102 1049.5 Q1104 1050.5 1104 1052 L1093 1058.5 Z" fill="url(#bsg)"/>
<rect x="1090" y="1072" width="6" height="3" rx="1.5" fill="#8c8580"/>
<!-- scal active -->
<rect x="1118" y="1037" width="38" height="38" rx="4" fill="#faf5f1"/>
<rect x="1125" y="1044" width="24" height="23.5" rx="5" fill="#161616"/>
<defs><linearGradient id="blade" x1="0" y1="0" x2="1" y2="1"><stop offset="0" stop-color="#6e6e6e"/><stop offset="1" stop-color="#d8d8d8"/></linearGradient></defs>
<path d="M1136.5 1044.5 L1140.5 1044.5 L1131.5 1058 L1127.5 1058 Z" fill="url(#blade)"/>
<path d="M1136.5 1055 Q1138 1049.3 1142 1049.3 Q1146.5 1049.5 1146.5 1055 Z" fill="#d0d0d0"/>
<path d="M1142 1059.5 L1145.5 1059.5 L1138.5 1067 L1135 1067 Z" fill="url(#blade)"/>
<rect x="1128.5" y="1053.8" width="17" height="6.6" fill="#161616"/>
<g fill="none" stroke="#f4f4f4" stroke-width="1.2">
<path d="M1133.5 1055.2 H1130.3 V1058.8 H1133.5"/>
<path d="M1134.8 1059.2 V1055.2 H1138.2 V1059.2 M1134.8 1057.2 H1138.2"/>
<path d="M1139.8 1054.8 V1058.8 H1144"/>
</g>
<rect x="1129" y="1072" width="16" height="3" rx="1.5" fill="#1a6fc8"/>
<!-- paint -->
<defs><linearGradient id="pal" x1="0" y1="0" x2="1" y2="1"><stop offset="0" stop-color="#45c6f2"/><stop offset="1" stop-color="#1a86dc"/></linearGradient></defs>
<path d="M1180.5 1045.3 C1187 1045.3 1192 1049.5 1192 1055.5 C1192 1060 1189 1064.5 1185 1066 C1181 1067.5 1178 1066 1178.5 1063 C1179 1061 1177 1060 1175 1061.5 C1172.5 1063.5 1169.8 1063 1169.8 1059 C1169.8 1051 1174 1045.3 1180.5 1045.3 Z" fill="url(#pal)"/>
<circle cx="1173.5" cy="1056.5" r="1.6" fill="#c8502a"/>
<circle cx="1176.5" cy="1051.3" r="1.8" fill="#2a9a30"/>
<circle cx="1181.4" cy="1049.2" r="1.6" fill="#f0c828"/>
<path d="M1181.4 1055.9 L1182.9 1057.4 L1181.4 1058.9 L1179.9 1057.4 Z" fill="#e8fbff"/>
<rect x="1186.2" y="1055.5" width="2.6" height="12.2" rx="1" fill="#9a6420"/>
<path d="M1185.3 1052.3 H1189.7 L1189 1055.8 H1186 Z" fill="#eadcb8"/>
<rect x="1178" y="1072" width="6" height="3" rx="1.5" fill="#8c8580"/>
<!-- tray -->
<path d="M1636.5 1058.5 L1642 1053 L1647.5 1058.5" fill="none" stroke="#1a1a1a" stroke-width="1.2"/>
<rect x="1658.5" y="1051.5" width="14" height="10" fill="#c4e3fa" stroke="#68a8e0" stroke-width="1"/>
<rect x="1668" y="1052.5" width="3" height="3" fill="#d9541e"/>
<rect x="1661" y="1057" width="8" height="3" fill="#f4fbff"/>
<path d="M1682.5 1056 A7.5 7.5 0 0 1 1696.5 1052.5" fill="none" stroke="#111" stroke-width="1.1"/>
<path d="M1693.5 1052.5 H1697 V1049" fill="none" stroke="#111" stroke-width="1.1"/>
<path d="M1684 1063.5 L1683 1060 L1686.5 1059.5 M1683.2 1060.2 Q1686 1063 1689 1063.2" fill="none" stroke="#111" stroke-width="1.1"/>
<circle cx="1694" cy="1059.8" r="3.9" fill="#f5a00e"/>
<path d="M1710.5 1056.5 L1724 1048.5 L1719.5 1063.5 L1717 1057.5 Z" fill="none" stroke="#2b5597" stroke-width="1.1" stroke-linejoin="round"/>
<g fill="none" stroke="#1a1a1a" stroke-width="1">
<path d="M1798.5 1049.5 H1786.5 V1061.5 H1799"/>
<path d="M1790 1063.5 H1798.5 M1792 1061.5 V1063.5"/>
<rect x="1798.5" y="1048.5" width="3" height="4.5" rx="1.5"/>
<path d="M1800 1053 V1064"/>
<path d="M1810.5 1053.5 H1813.5 L1817.5 1050 V1062 L1813.5 1058.5 H1810.5 Z"/>
<path d="M1819.5 1053.5 Q1821 1056 1819.5 1058.5"/>
<path d="M1821.5 1051.5 Q1824.5 1056 1821.5 1060.5"/>
<path d="M1823.5 1049.5 Q1828 1056 1823.5 1062.5"/>
</g>
</svg>

<div class="t " style="left:1744.6px;top:1044px;font-size:11.2px;color:#1a1a1a;letter-spacing:-0.483px;">ENG</div>
<div class="t " style="left:1748.7px;top:1060px;font-size:11.2px;color:#1a1a1a;letter-spacing:-0.473px;">UK</div>
<div class="t " style="left:1874px;top:1043px;font-size:11.2px;color:#1a1a1a;letter-spacing:-0.300px;">17:55</div>
<div class="t " style="left:1843px;top:1060px;font-size:11.2px;color:#1a1a1a;letter-spacing:0.150px;">13/10/2022</div>
</body></html>
